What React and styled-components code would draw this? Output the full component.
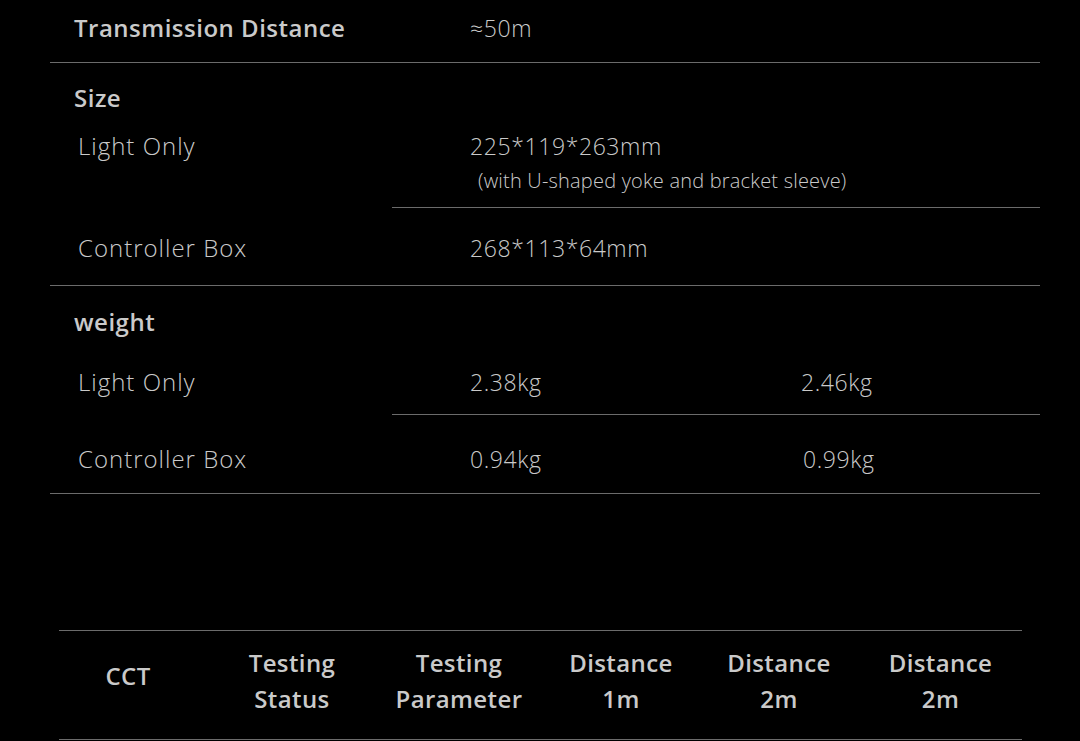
import React from "react";
import styled, { createGlobalStyle } from "styled-components";

const GlobalStyle = createGlobalStyle`
  html, body {
    margin: 0;
    padding: 0;
    background: #000;
  }
  body {
    font-family: "Open Sans", "Noto Sans", sans-serif;
    color: #cacaca;
  }
`;

const Page = styled.div`
  width: 1080px;
  height: 741px;
  overflow: hidden;
  background: #000;
`;

const SpecTable = styled.div`
  margin-left: 50px;
  width: 990px;
`;

const Section = styled.div`
  border-bottom: 1px solid #6b6b6b;
`;

const TitleRow = styled.div`
  display: grid;
  grid-template-columns: 342px 1fr;
  padding: 13px 0 19px;
  line-height: 30px;
`;

const Heading = styled.div`
  padding: ${(p) => p.$top || 0}px 0 ${(p) => p.$bottom || 0}px 24px;
  font-size: 24px;
  font-weight: 600;
  letter-spacing: 0.5px;
  line-height: 30px;
`;

const SubRow = styled.div`
  display: grid;
  grid-template-columns: 342px 1fr;
`;

const Label = styled.div`
  padding-left: 28px;
  padding-top: ${(p) => p.$top}px;
  font-size: 24px;
  font-weight: 300;
  letter-spacing: 1px;
  line-height: 30px;
`;

const Cell = styled.div`
  display: grid;
  grid-template-columns: ${(p) => (p.$split ? "331px 1fr" : "1fr")};
  padding: ${(p) => p.$top}px 0 ${(p) => p.$bottom}px 78px;
  border-bottom: ${(p) => (p.$line ? "1px solid #6b6b6b" : "none")};
`;

const Value = styled.div`
  font-size: 23px;
  font-weight: 300;
  letter-spacing: 0.6px;
  line-height: 30px;
  padding-left: ${(p) => p.$shift || 0}px;
`;

const Note = styled.div`
  font-size: 20px;
  font-weight: 300;
  letter-spacing: 0.2px;
  line-height: 24px;
  padding: 8px 0 0 8px;
`;

const Spacer = styled.div`
  height: 136px;
`;

const TestTable = styled.div`
  margin-left: 59px;
  width: 963px;
  display: grid;
  grid-template-columns: 138px 190px 144px 180px 136px 187px;
  border-top: 1px solid #6b6b6b;
  border-bottom: 1px solid #6b6b6b;
  padding: 14px 0 22px;
`;

const HeadCell = styled.div`
  display: flex;
  align-items: center;
  justify-content: center;
  text-align: center;
  font-size: 24px;
  font-weight: 600;
  letter-spacing: 0.4px;
  line-height: 36px;
  padding-bottom: ${(p) => (p.$single ? 10 : 0)}px;
`;

const headers = [
  ["CCT"],
  ["Testing", "Status"],
  ["Testing", "Parameter"],
  ["Distance", "1m"],
  ["Distance", "2m"],
  ["Distance", "2m"],
];

export default function App() {
  return (
    <Page>
      <GlobalStyle />
      <SpecTable>
        <Section>
          <TitleRow>
            <Heading>Transmission Distance</Heading>
            <Value $shift={78}>≈50m</Value>
          </TitleRow>
        </Section>

        <Section>
          <Heading $top={20} $bottom={9}>Size</Heading>
          <SubRow>
            <Label $top={9}>Light Only</Label>
            <Cell $top={9} $bottom={14} $line>
              <div>
                <Value>225*119*263mm</Value>
                <Note>(with U-shaped yoke and bracket sleeve)</Note>
              </div>
            </Cell>
          </SubRow>
          <SubRow>
            <Label $top={25}>Controller Box</Label>
            <Cell $top={25} $bottom={22}>
              <Value>268*113*64mm</Value>
            </Cell>
          </SubRow>
        </Section>

        <Section>
          <Heading $top={21} $bottom={15}>weight</Heading>
          <SubRow>
            <Label $top={15}>Light Only</Label>
            <Cell $top={15} $bottom={17} $split $line>
              <Value>2.38kg</Value>
              <Value>2.46kg</Value>
            </Cell>
          </SubRow>
          <SubRow>
            <Label $top={29}>Controller Box</Label>
            <Cell $top={29} $bottom={19} $split>
              <Value>0.94kg</Value>
              <Value $shift={2}>0.99kg</Value>
            </Cell>
          </SubRow>
        </Section>
      </SpecTable>

      <Spacer />

      <TestTable>
        {headers.map((lines, i) => (
          <HeadCell key={i} $single={lines.length === 1}>
            <div>
              {lines.map((l, j) => (
                <div key={j}>{l}</div>
              ))}
            </div>
          </HeadCell>
        ))}
      </TestTable>
    </Page>
  );
}
